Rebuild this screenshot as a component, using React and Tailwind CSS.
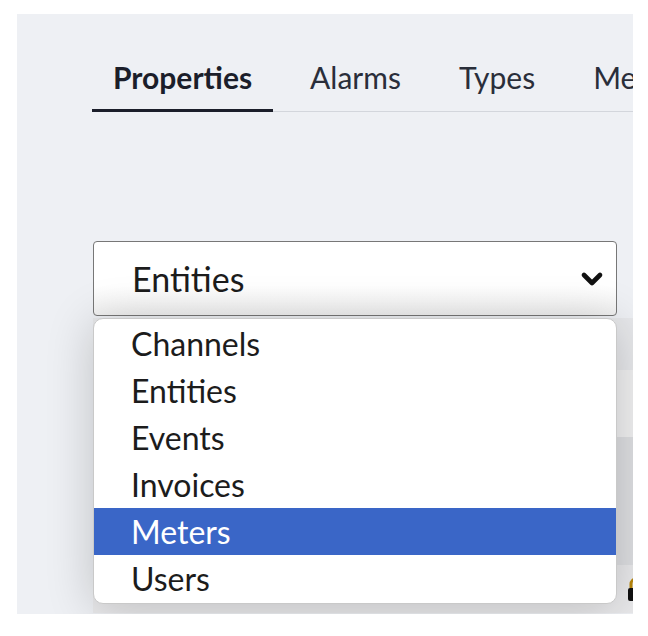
import { ChevronDown } from 'lucide-react'

const tabs = ['Properties', 'Alarms', 'Types', 'Meters']
const options = ['Channels', 'Entities', 'Events', 'Invoices', 'Meters', 'Users']

export default function App() {
  return (
    <div className="h-[636px] w-[648px] bg-white pl-[17px] pt-[14px] font-['Lato',sans-serif]">
      <div className="relative h-[600px] w-[616px] overflow-hidden bg-[#eef0f4]">
        {/* tab strip */}
        <div className="ml-[75px] mt-[45px] flex w-[600px] border-b border-[#d3d6dc]">
          {tabs.map((t, i) => (
            <div
              key={t}
              className={
                i === 0
                  ? 'mb-[-1px] mr-[16px] whitespace-nowrap border-b-[3px] border-[#1b1e2a] px-[21px] pb-[14px] text-[30px] leading-[36px] font-bold text-[#1b1e2a]'
                  : 'mr-[16px] whitespace-nowrap px-[21px] pb-[14px] text-[30px] leading-[36px] text-[#2a2e3a]'
              }
            >
              {t}
            </div>
          ))}
        </div>

        {/* select */}
        <div className="ml-[76px] mt-[129px] flex h-[75px] w-[524px] items-center justify-between rounded-[4px] border border-[#777] bg-gradient-to-b from-white from-60% to-[#f1f1f1] pl-[38px] pr-[8px]">
          <span className="text-[34px] text-[#1c1c1c]">Entities</span>
          <ChevronDown className="h-[32px] w-[32px] text-[#111]" strokeWidth={3.5} />
        </div>

        {/* content behind the open list */}
        <div className="ml-[76px] mt-[2px] flex flex-col">
          <div className="h-[52px] bg-[#e7e8eb]" />
          <div className="h-[67px] bg-[#f0f0f1]" />
          <div className="h-[128px] bg-[#dedfe2]" />
          <div className="h-[48px] bg-[#e9e9eb]" />
        </div>
        <svg className="absolute left-[609px] top-[562px]" width="20" height="26" viewBox="0 0 20 26">
          <path d="M5 12V8a5 5 0 0 1 10 0v4" fill="none" stroke="#b8860b" strokeWidth="3" />
          <rect x="2" y="12" width="16" height="13" rx="2" fill="#111" />
        </svg>

        {/* open options list */}
        <div className="absolute left-[76px] top-[304px] w-[524px] overflow-hidden rounded-[10px] border border-[#c9c9c9] bg-white py-px shadow-[0_4px_48px_rgba(0,0,0,0.2)]">
          {options.map((o) => (
            <div
              key={o}
              className={
                o === 'Meters'
                  ? 'flex h-[47px] items-center bg-[#3a66c7] pl-[37px] text-[32px] text-white'
                  : 'flex h-[47px] items-center pl-[37px] text-[32px] text-[#1c1c1c]'
              }
            >
              {o}
            </div>
          ))}
        </div>
      </div>
    </div>
  )
}
